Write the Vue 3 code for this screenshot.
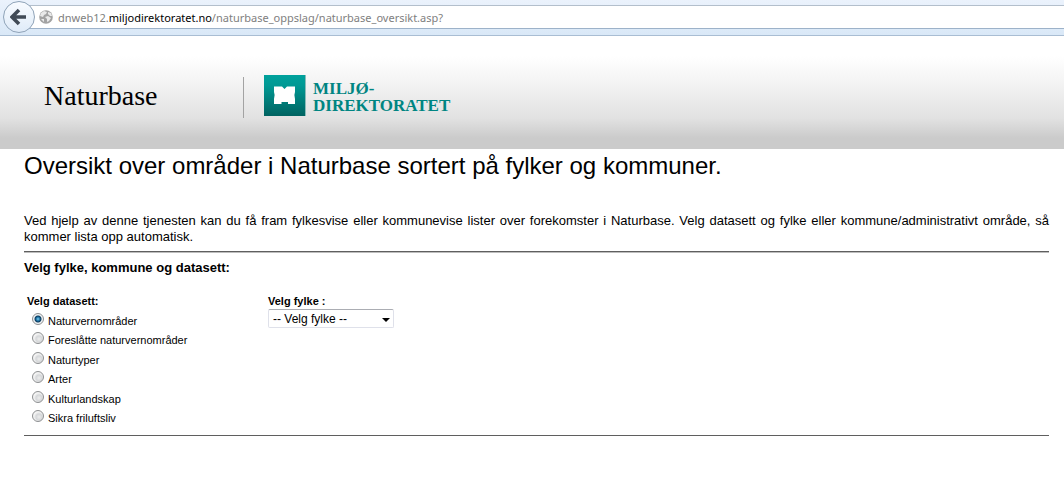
<script setup>
import { ref } from 'vue'

const address = ref('dnweb12.miljodirektoratet.no/naturbase_oppslag/naturbase_oversikt.asp?')
const datasets = [
  'Naturvernområder',
  'Foreslåtte naturvernområder',
  'Naturtyper',
  'Arter',
  'Kulturlandskap',
  'Sikra friluftsliv'
]
const selected = ref('Naturvernområder')
const county = ref('')
</script>

<template>
  <div class="window">
    <nav class="toolbar" aria-label="Nettleser">
      <button class="back" type="button" aria-label="Tilbake">
        <svg viewBox="0 0 18 18" width="18" height="18" aria-hidden="true">
          <path d="M9 2 L2 9 L9 16 M3 9 H16" fill="none" stroke="#404a56" stroke-width="3.6" />
        </svg>
      </button>
      <div class="address" :title="address">
        <svg class="globe" viewBox="0 0 14 14" width="14" height="14" aria-hidden="true">
          <circle cx="7" cy="7" r="6.8" fill="#a3a3a3" />
          <path d="M2 3 L5 1 L8 2 L7 4 L5 5 L4 7 L1 6 Z M9 2 L12 3 L13 6 L11 6 L9 4 Z M6 7 L9 6 L12 8 L10 11 L8 12 L8 9 Z M2 9 L5 9 L5 12 Z" fill="#e9e9e9" />
        </svg>
        <span class="url">dnweb12.<b>miljodirektoratet.no</b>/naturbase_oppslag/naturbase_oversikt.asp?</span>
      </div>
    </nav>

    <header class="banner">
      <span class="site">Naturbase</span>
      <div class="brand">
        <svg viewBox="0 0 42 41" width="42" height="41" aria-hidden="true">
          <defs>
            <linearGradient id="teal" x1="0" y1="0" x2="0" y2="1">
              <stop offset="0" stop-color="#00a19c" />
              <stop offset="0.25" stop-color="#009994" />
              <stop offset="1" stop-color="#006361" />
            </linearGradient>
          </defs>
          <rect width="42" height="41" fill="url(#teal)" />
          <rect x="41" width="1" height="41" fill="#8cbcba" />
          <path d="M10 11.500 H18 L20.500 14 L23 11.500 H31 V29 H24 V27 H17.500 V29 H10 Z" fill="#fff" />
          <path d="M10 17 L10.600 20 L10 24 Z M31 17 L30.400 20 L31 24 Z" fill="#00817e" />
        </svg>
        <span class="brand-name">MILJØ-<br />DIREKTORATET</span>
      </div>
    </header>

    <main class="content">
      <h1>Oversikt over områder i Naturbase sortert på fylker og kommuner.</h1>
      <p class="intro">
        Ved hjelp av denne tjenesten kan du få fram fylkesvise eller kommunevise lister over forekomster i
        Naturbase. Velg datasett og fylke eller kommune/administrativt område, så kommer lista opp automatisk.
      </p>
      <form class="filters">
        <h2>Velg fylke, kommune og datasett:</h2>
        <div class="columns">
          <fieldset>
            <legend>Velg datasett:</legend>
            <label v-for="name in datasets" :key="name" class="option">
              <input v-model="selected" type="radio" name="dataset" :value="name" />
              <span>{{ name }}</span>
            </label>
          </fieldset>
          <div class="county">
            <label for="county">Velg fylke :</label>
            <div class="select-box">
              <select id="county" v-model="county">
                <option value="">-- Velg fylke --</option>
              </select>
              <svg viewBox="0 0 8 4" width="8" height="4" aria-hidden="true">
                <path d="M0 0 H8 L4 4 Z" fill="#000" />
              </svg>
            </div>
          </div>
        </div>
      </form>
    </main>
  </div>
</template>

<style>
body {
  background: #fff;
}
</style>

<style scoped>
.window {
  color: #000;
  font-family: "Liberation Sans", Arial, sans-serif;
}

.toolbar {
  box-sizing: border-box;
  display: flex;
  align-items: flex-start;
  height: 36px;
  padding-top: 5px;
  border-bottom: 1px solid #a9bdd3;
  background: linear-gradient(#ebf2fc, #d9e8f7);
}

.back {
  box-sizing: border-box;
  position: relative;
  z-index: 1;
  display: flex;
  align-items: center;
  justify-content: center;
  flex: none;
  width: 32px;
  height: 32px;
  margin: -4px -18px 0 3px;
  padding: 0;
  border: 1px solid #8fa3b8;
  border-radius: 50%;
  background: linear-gradient(#f8fbff, #dfebf8);
}

.address {
  box-sizing: border-box;
  display: flex;
  align-items: center;
  flex: 1;
  gap: 5px;
  height: 24px;
  padding-left: 22px;
  border-top: 1px solid #b3bfcc;
  border-bottom: 1px solid #9db2c9;
  background: #fff;
}

.globe {
  flex: none;
}

.url {
  padding-top: 2px;
  color: #808080;
  font: 11px/16px "Noto Sans", "Open Sans", sans-serif;
  white-space: nowrap;
}

.url b {
  color: #000;
  font-weight: 400;
}

.banner {
  box-sizing: border-box;
  display: flex;
  align-items: center;
  height: 113px;
  padding: 0 24px 0 44px;
  background: linear-gradient(#fff 0, #fff 20px, #f2f2f2 50px, #e2e2e2 82px, #cbcbcb 102px, #cbcbcb 100%);
}

.site {
  box-sizing: border-box;
  width: 200px;
  padding-bottom: 3px;
  border-right: 1px solid #a3a3a3;
  margin-top: 9px;
  font: 28px/38px "Liberation Serif", "Times New Roman", serif;
}

.brand {
  display: flex;
  align-items: center;
  gap: 7px;
  margin: 6px 0 0 20px;
}

.brand-name {
  padding-top: 2px;
  color: #008582;
  font: bold 17px/17px "Liberation Serif", serif;
}

.content {
  padding: 0 15px 0 24px;
}

h1 {
  margin: 3px 0 33px;
  font-size: 24px;
  font-weight: 400;
  line-height: 28px;
}

.intro {
  margin: 0 0 6px;
  font-size: 13px;
  line-height: 16px;
  text-align: justify;
}

.filters {
  border-top: 1px solid #5f5f5f;
  border-bottom: 1px solid #5f5f5f;
  box-shadow: 0 1px #bdbdbd, inset 0 1px #bdbdbd;
}

h2 {
  margin: 0;
  padding-top: 8px;
  font-size: 13px;
  line-height: 16px;
}

.columns {
  display: flex;
  padding: 17px 0 9px 3px;
}

fieldset {
  width: 241px;
  margin: 0;
  padding: 0;
  border: 0;
}

legend,
.county label {
  display: block;
  padding: 0;
  font-size: 11px;
  font-weight: 700;
  line-height: 16px;
}

.option {
  display: flex;
  align-items: center;
  height: 19px;
  gap: 4px;
  padding-left: 5px;
  font-size: 11px;
}

.option:nth-of-type(even) {
  height: 20px;
}

.option span {
  padding-top: 4px;
}

input[type="radio"] {
  appearance: none;
  box-sizing: border-box;
  flex: none;
  width: 12px;
  height: 12px;
  margin: 0;
  border: 1px solid #8d8f91;
  border-radius: 50%;
  background: radial-gradient(circle at 60% 60%, #ededed 0, #d5d7d9 3px, #f3f3f3 5px);
}

input[type="radio"]:checked {
  background: radial-gradient(circle, #7fd0f2 0, #16699c 2px, #103c5d 3px, #eef2f4 4px);
}

.select-box {
  position: relative;
  width: 126px;
}

select {
  appearance: none;
  box-sizing: border-box;
  display: block;
  width: 100%;
  height: 19px;
  padding: 0 16px 0 4px;
  border: 1px solid #dfe1ea;
  border-top-color: #abadb3;
  border-radius: 2px;
  background: #fff;
  color: #000;
  font: 12px/16px "Liberation Sans", Arial, sans-serif;
}

.select-box svg {
  position: absolute;
  top: 9px;
  right: 4px;
  pointer-events: none;
}
</style>
